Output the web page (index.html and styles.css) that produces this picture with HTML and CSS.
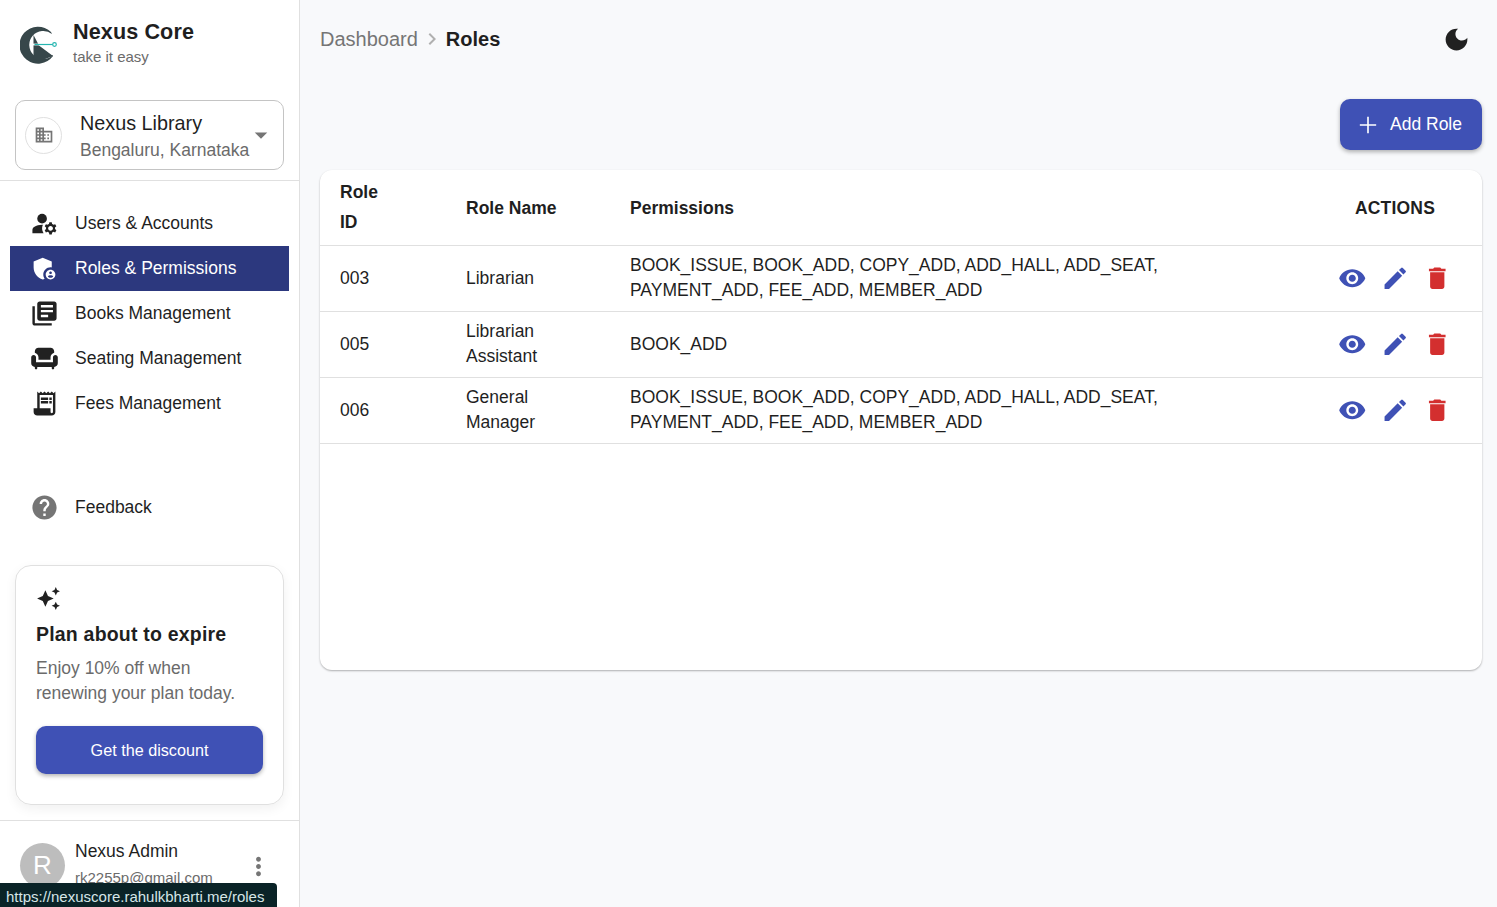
FILE: index.html
```html
<!DOCTYPE html>
<html lang="en">
<head>
  <meta charset="UTF-8">
  <title>Nexus Core - Roles</title>
  <link rel="stylesheet" href="styles.css">
</head>
<body>
  <div class="layout">
    <aside class="sidebar">
      <div class="brand">
        <svg class="logo" viewBox="0 0 40 40">
          <path d="M31 7A18.500 18.500 0 1 0 33 31L33 30A14 14 0 1 1 32 9z" fill="#37474a"/>
          <path d="M13.500 10L19 20.500L33 31L20 36L13.500 34z" fill="#37474a"/>
          <path d="M13 19.500H33" stroke="#fff" stroke-width="1.800"/>
          <path d="M14.500 19.500H33" stroke="#26b5b0" stroke-width="1.200"/>
          <circle cx="34.500" cy="19.500" r="1.800" fill="#fff" stroke="#26b5b0" stroke-width="1.200"/>
        </svg>
        <div>
          <div class="brand-name">Nexus Core</div>
          <div class="brand-tag">take it easy</div>
        </div>
      </div>

      <div class="org-wrap">
        <div class="org-select">
          <span class="org-icon">
            <svg viewBox="0 0 24 24"><path d="M12 7V3H2v18h20V7H12zM6 19H4v-2h2v2zm0-4H4v-2h2v2zm0-4H4V9h2v2zm0-4H4V5h2v2zm4 12H8v-2h2v2zm0-4H8v-2h2v2zm0-4H8V9h2v2zm0-4H8V5h2v2zm10 12h-8v-2h2v-2h-2v-2h2v-2h-2V9h8v10zm-2-8h-2v2h2v-2zm0 4h-2v2h2v-2z"/></svg>
          </span>
          <div class="org-text">
            <div class="org-name">Nexus Library</div>
            <div class="org-place">Bengaluru, Karnataka</div>
          </div>
          <svg class="org-caret" viewBox="0 0 24 24"><path d="M7 10l5 5 5-5z"/></svg>
        </div>
      </div>

      <nav class="nav">
        <a class="nav-item">
          <svg viewBox="0 0 24 24"><circle cx="10" cy="8" r="4"/><path d="M10.670 13.020c-.22-.01-.44-.02-.67-.02-2.420 0-4.680.67-6.610 1.820-.88.52-1.390 1.500-1.390 2.530V20h9.260c-.79-1.130-1.260-2.510-1.260-4 0-1.070.25-2.070.67-2.980zM20.750 16c0-.22-.03-.42-.06-.63l1.140-1.010-1-1.730-1.450.49c-.32-.27-.68-.48-1.080-.63L18 11h-2l-.3 1.490c-.4.15-.76.36-1.080.63l-1.450-.49-1 1.730 1.140 1.010c-.03.21-.06.41-.06.63s.03.42.06.63l-1.140 1.010 1 1.730 1.450-.49c.32.27.68.48 1.080.63L16 21h2l.3-1.490c.4-.15.76-.36 1.080-.63l1.450.49 1-1.730-1.140-1.010c.03-.21.06-.41.06-.63zM17 18c-1.100 0-2-.9-2-2s.9-2 2-2 2 .9 2 2-.9 2-2 2z"/></svg>
          Users &amp; Accounts
        </a>
        <a class="nav-item active">
          <svg viewBox="0 0 24 24"><path d="M17 11c.34 0 .67.04 1 .09V6.270L10.500 3 3 6.270v4.910c0 4.540 3.200 8.790 7.500 9.820.55-.13 1.080-.32 1.600-.55-.69-.98-1.100-2.170-1.100-3.450 0-3.310 2.690-6 6-6z"/><path d="M17 13c-2.210 0-4 1.790-4 4s1.790 4 4 4 4-1.790 4-4-1.790-4-4-4zm0 1.380c.62 0 1.120.51 1.120 1.120s-.51 1.120-1.120 1.120-1.120-.51-1.120-1.120.5-1.120 1.120-1.120zm0 5.370c-.93 0-1.740-.46-2.240-1.170.05-.72 1.510-1.080 2.240-1.080s2.190.36 2.240 1.080c-.5.71-1.310 1.170-2.240 1.170z"/></svg>
          Roles &amp; Permissions
        </a>
        <a class="nav-item">
          <svg viewBox="0 0 24 24"><path d="M4 6H2v14c0 1.100.9 2 2 2h14v-2H4V6zm16-4H8c-1.100 0-2 .9-2 2v12c0 1.100.9 2 2 2h12c1.100 0 2-.9 2-2V4c0-1.100-.9-2-2-2zm-1 9H9V9h10v2zm-4 4H9v-2h6v2zm4-8H9V5h10v2z"/></svg>
          Books Management
        </a>
        <a class="nav-item">
          <svg viewBox="0 0 24 24"><path d="M7 11v2h10v-2c0-1.860 1.280-3.410 3-3.860V6c0-1.650-1.350-3-3-3H7C5.350 3 4 4.350 4 6v1.140c1.720.45 3 2 3 3.860z"/><path d="M21 9c-1.100 0-2 .9-2 2v4H5v-4c0-1.100-.9-2-2-2s-2 .9-2 2v5c0 1.650 1.350 3 3 3v1c0 .55.45 1 1 1s1-.45 1-1v-1h12v1c0 .55.45 1 1 1s1-.45 1-1v-1c1.650 0 3-1.350 3-3v-5c0-1.100-.9-2-2-2z"/></svg>
          Seating Management
        </a>
        <a class="nav-item">
          <svg viewBox="0 0 24 24"><path d="M19.500 3.500 18 2l-1.500 1.500L15 2l-1.500 1.500L12 2l-1.500 1.500L9 2 7.500 3.500 6 2v14H3v3c0 1.660 1.340 3 3 3h12c1.660 0 3-1.340 3-3V2l-1.500 1.500zM19 19c0 .55-.45 1-1 1s-1-.45-1-1v-3H8V5h11v14z"/><path d="M9 7h6v2H9zm7 0h2v2h-2zm-7 3h6v2H9zm7 0h2v2h-2z"/></svg>
          Fees Management
        </a>
      </nav>

      <a class="nav-item feedback">
        <svg viewBox="0 0 24 24"><path d="M12 2C6.480 2 2 6.480 2 12s4.480 10 10 10 10-4.480 10-10S17.520 2 12 2zm1 17h-2v-2h2v2zm2.070-7.750-.9.92C13.450 12.900 13 13.500 13 15h-2v-.5c0-1.100.45-2.100 1.170-2.830l1.240-1.260c.37-.36.59-.86.59-1.410 0-1.100-.9-2-2-2s-2 .9-2 2H8c0-2.210 1.790-4 4-4s4 1.790 4 4c0 .88-.36 1.680-.93 2.250z"/></svg>
        Feedback
      </a>

      <div class="plan-card">
        <svg class="plan-icon" viewBox="0 0 24 24"><path d="M19 9l1.250-2.750L23 5l-2.750-1.250L19 1l-1.250 2.750L15 5l2.750 1.250L19 9zm-7.500.5L9 4 6.500 9.500 1 12l5.500 2.500L9 20l2.500-5.500L17 12l-5.500-2.500zM19 15l-1.250 2.750L15 19l2.750 1.250L19 23l1.250-2.750L23 19l-2.750-1.250L19 15z"/></svg>
        <div class="plan-title">Plan about to expire</div>
        <p class="plan-text">Enjoy 10% off when renewing your plan today.</p>
        <button class="plan-btn">Get the discount</button>
      </div>

      <div class="user-row">
        <div class="avatar">R</div>
        <div class="user-text">
          <div class="user-name">Nexus Admin</div>
          <div class="user-mail">rk2255p@gmail.com</div>
        </div>
        <svg class="user-more" viewBox="0 0 24 24"><path d="M12 8c1.100 0 2-.9 2-2s-.9-2-2-2-2 .9-2 2 .9 2 2 2zm0 2c-1.100 0-2 .9-2 2s.9 2 2 2 2-.9 2-2-.9-2-2-2zm0 6c-1.100 0-2 .9-2 2s.9 2 2 2 2-.9 2-2-.9-2-2-2z"/></svg>
      </div>
    </aside>

    <main class="main">
      <header class="topbar">
        <div class="crumbs">
          <span class="crumb">Dashboard</span>
          <svg class="crumb-sep" viewBox="0 0 24 24"><path d="M10 6 8.590 7.410 13.170 12l-4.580 4.590L10 18l6-6z"/></svg>
          <span class="crumb-current">Roles</span>
        </div>
        <svg class="theme-icon" viewBox="0 0 24 24"><path d="M12 3c-4.970 0-9 4.030-9 9s4.030 9 9 9 9-4.030 9-9c0-.46-.04-.92-.1-1.360-.98 1.370-2.580 2.260-4.400 2.260-2.980 0-5.400-2.420-5.400-5.400 0-1.810.89-3.420 2.260-4.400-.44-.06-.9-.1-1.360-.1z"/></svg>
      </header>

      <div class="toolbar">
        <button class="add-btn">
          <svg viewBox="0 0 24 24"><path d="M19 12.700h-6.300V19h-1.400v-6.300H5v-1.400h6.300V5h1.400v6.300H19z"/></svg>
          Add Role
        </button>
      </div>

      <div class="table-card">
        <table class="roles">
          <colgroup>
            <col class="col-id"><col class="col-name"><col class="col-perm"><col class="col-act">
          </colgroup>
          <thead>
            <tr>
              <th>Role<br>ID</th>
              <th>Role Name</th>
              <th>Permissions</th>
              <th class="act-head">ACTIONS</th>
            </tr>
          </thead>
          <tbody>
            <tr>
              <td>003</td>
              <td>Librarian</td>
              <td class="perm">BOOK_ISSUE, BOOK_ADD, COPY_ADD, ADD_HALL, ADD_SEAT, PAYMENT_ADD, FEE_ADD, MEMBER_ADD</td>
              <td>
                <div class="actions">
                  <svg class="eye" viewBox="0 0 24 24"><path d="M12 4.500C7 4.500 2.730 7.610 1 12c1.730 4.390 6 7.500 11 7.500s9.270-3.110 11-7.500c-1.730-4.390-6-7.500-11-7.500zM12 17c-2.760 0-5-2.240-5-5s2.240-5 5-5 5 2.240 5 5-2.240 5-5 5zm0-8c-1.660 0-3 1.340-3 3s1.340 3 3 3 3-1.340 3-3-1.340-3-3-3z"/></svg>
                  <svg class="pen" viewBox="0 0 24 24"><path d="M3 17.250V21h3.750L17.810 9.940l-3.750-3.750L3 17.250zM20.710 7.040c.39-.39.39-1.020 0-1.410l-2.340-2.340a.9959.9959 0 0 0-1.410 0l-1.830 1.830 3.750 3.750 1.830-1.830z"/></svg>
                  <svg class="bin" viewBox="0 0 24 24"><path d="M6 19c0 1.100.9 2 2 2h8c1.100 0 2-.9 2-2V7H6v12zM19 4h-3.500l-1-1h-5l-1 1H5v2h14V4z"/></svg>
                </div>
              </td>
            </tr>
            <tr>
              <td>005</td>
              <td>Librarian Assistant</td>
              <td class="perm">BOOK_ADD</td>
              <td>
                <div class="actions">
                  <svg class="eye" viewBox="0 0 24 24"><path d="M12 4.500C7 4.500 2.730 7.610 1 12c1.730 4.390 6 7.500 11 7.500s9.270-3.110 11-7.500c-1.730-4.390-6-7.500-11-7.500zM12 17c-2.760 0-5-2.240-5-5s2.240-5 5-5 5 2.240 5 5-2.240 5-5 5zm0-8c-1.660 0-3 1.340-3 3s1.340 3 3 3 3-1.340 3-3-1.340-3-3-3z"/></svg>
                  <svg class="pen" viewBox="0 0 24 24"><path d="M3 17.250V21h3.750L17.810 9.940l-3.750-3.750L3 17.250zM20.710 7.040c.39-.39.39-1.020 0-1.410l-2.340-2.340a.9959.9959 0 0 0-1.410 0l-1.830 1.830 3.750 3.750 1.830-1.830z"/></svg>
                  <svg class="bin" viewBox="0 0 24 24"><path d="M6 19c0 1.100.9 2 2 2h8c1.100 0 2-.9 2-2V7H6v12zM19 4h-3.500l-1-1h-5l-1 1H5v2h14V4z"/></svg>
                </div>
              </td>
            </tr>
            <tr>
              <td>006</td>
              <td>General Manager</td>
              <td class="perm">BOOK_ISSUE, BOOK_ADD, COPY_ADD, ADD_HALL, ADD_SEAT, PAYMENT_ADD, FEE_ADD, MEMBER_ADD</td>
              <td>
                <div class="actions">
                  <svg class="eye" viewBox="0 0 24 24"><path d="M12 4.500C7 4.500 2.730 7.610 1 12c1.730 4.390 6 7.500 11 7.500s9.270-3.110 11-7.500c-1.730-4.390-6-7.500-11-7.500zM12 17c-2.760 0-5-2.240-5-5s2.240-5 5-5 5 2.240 5 5-2.240 5-5 5zm0-8c-1.660 0-3 1.340-3 3s1.340 3 3 3 3-1.340 3-3-1.340-3-3-3z"/></svg>
                  <svg class="pen" viewBox="0 0 24 24"><path d="M3 17.250V21h3.750L17.810 9.940l-3.750-3.750L3 17.250zM20.710 7.040c.39-.39.39-1.020 0-1.410l-2.340-2.340a.9959.9959 0 0 0-1.410 0l-1.830 1.830 3.750 3.750 1.830-1.830z"/></svg>
                  <svg class="bin" viewBox="0 0 24 24"><path d="M6 19c0 1.100.9 2 2 2h8c1.100 0 2-.9 2-2V7H6v12zM19 4h-3.500l-1-1h-5l-1 1H5v2h14V4z"/></svg>
                </div>
              </td>
            </tr>
          </tbody>
        </table>
      </div>
    </main>
  </div>

  <div class="status-bar">https://nexuscore.rahulkbharti.me/roles</div>
</body>
</html>
```

FILE: styles.css
```css
* {
  box-sizing: border-box;
}

html, body {
  height: 100%;
}

body {
  margin: 0;
  overflow: hidden;
  font-family: "Liberation Sans", Arial, sans-serif;
  color: #1f1f1f;
  background-color: #f8f9fb;
}

.layout {
  display: flex;
  height: 907px;
}

/* sidebar */
.sidebar {
  width: 300px;
  flex-shrink: 0;
  display: flex;
  flex-direction: column;
  background: white;
  border-right: 1px solid #e0e0e0;
  overflow: hidden;
}

.brand {
  height: 90px;
  padding: 0 0 0 20px;
  display: flex;
  align-items: center;
  gap: 13px;
}

.logo {
  width: 40px;
  height: 40px;
  flex-shrink: 0;
}

.brand-name {
  font-size: 21.600px;
  font-weight: 700;
  line-height: 28px;
  margin-top: -4px;
  letter-spacing: 0.1px;
}

.brand-tag {
  font-size: 15px;
  line-height: 22px;
  color: #6b6b6b;
}

.org-wrap {
  padding: 10px 15px;
  border-bottom: 1px solid #e0e0e0;
  height: 91px;
}

.org-select {
  height: 70px;
  border: 1px solid #c4c4c4;
  border-radius: 10px;
  display: flex;
  align-items: center;
  padding: 0 9px;
}

.org-icon {
  width: 37px;
  height: 37px;
  border: 1px solid #e0e0e0;
  border-radius: 50%;
  display: flex;
  align-items: center;
  justify-content: center;
  flex-shrink: 0;
}

.org-icon svg {
  width: 20px;
  height: 20px;
  fill: #757575;
}

.org-text {
  margin-left: 18px;
  padding-top: 2px;
  flex: 1;
  white-space: nowrap;
}

.org-name {
  font-size: 19.800px;
  line-height: 28px;
}

.org-place {
  font-size: 17.500px;
  line-height: 26px;
  color: #6b6b6b;
}

.org-caret {
  width: 30px;
  height: 30px;
  fill: #757575;
  margin-right: -2px;
  margin-left: -8px;
}

.nav {
  padding: 20px 10px 0;
  height: 304px;
}

.nav-item {
  height: 45px;
  display: flex;
  align-items: center;
  gap: 16px;
  padding: 0 20px;
  font-size: 17.500px;
  color: #1f1f1f;
  white-space: nowrap;
}

.nav-item svg {
  width: 29px;
  height: 29px;
  fill: #212121;
  flex-shrink: 0;
}

.nav-item.active {
  background-color: #2c387e;
  color: white;
}

.nav-item.active svg {
  fill: white;
}

.feedback {
  margin: 0 10px;
}

.feedback svg {
  fill: #757575;
}

.plan-card {
  margin: 35px 15px 0;
  height: 240px;
  padding: 20px 20px;
  border: 1px solid #e0e0e0;
  border-radius: 16px;
  box-shadow: 0 4px 12px rgba(0,0,0,0.06);
  flex-shrink: 0;
}

.plan-icon {
  display: block;
  width: 25px;
  height: 25px;
  fill: #212121;
}

.plan-title {
  font-size: 19.500px;
  font-weight: 700;
  line-height: 30px;
  margin-top: 8px;
  letter-spacing: 0.2px;
}

.plan-text {
  margin: 7px 0 0;
  font-size: 17.500px;
  line-height: 25px;
  color: #6b6b6b;
}

.plan-btn {
  display: block;
  width: 100%;
  height: 48px;
  margin-top: 20px;
  border: none;
  border-radius: 10px;
  background-color: #3f51b5;
  color: white;
  font-family: inherit;
  font-size: 16.200px;
  box-shadow: 0 2px 4px rgba(0,0,0,0.3);
}

.user-row {
  margin-top: 15px;
  border-top: 1px solid #e0e0e0;
  display: flex;
  align-items: flex-start;
  padding: 22px 20px 0;
  height: 87px;
}

.avatar {
  width: 45px;
  height: 45px;
  border-radius: 50%;
  background-color: #bdbdbd;
  color: white;
  font-size: 26px;
  display: flex;
  align-items: center;
  justify-content: center;
  flex-shrink: 0;
}

.user-text {
  margin-left: 10px;
  flex: 1;
  white-space: nowrap;
}

.user-name {
  font-size: 17.500px;
  line-height: 20px;
  margin-top: -2px;
}

.user-mail {
  font-size: 15px;
  line-height: 20px;
  margin-top: 7px;
  color: #6b6b6b;
}

.user-more {
  width: 29px;
  height: 29px;
  margin-top: 9px;
  margin-right: 6px;
  fill: #757575;
}

/* main area */
.main {
  flex: 1;
  padding: 0 15px 0 20px;
  min-width: 0;
}

.topbar {
  height: 78px;
  display: flex;
  align-items: center;
  justify-content: space-between;
  padding-right: 11px;
}

.crumbs {
  display: flex;
  align-items: center;
  font-size: 20px;
}

.crumb {
  color: #757575;
}

.crumb-sep {
  width: 24px;
  height: 24px;
  fill: #b0b0b0;
  margin: 0 2px;
}

.crumb-current {
  font-weight: 700;
}

.theme-icon {
  width: 29px;
  height: 29px;
  fill: #212121;
}

.toolbar {
  display: flex;
  justify-content: flex-end;
  margin-top: 21px;
}

.add-btn {
  width: 142px;
  height: 51px;
  display: flex;
  align-items: center;
  gap: 8px;
  padding: 0 0 0 14px;
  border: none;
  border-radius: 10px;
  background-color: #3f51b5;
  color: white;
  font-family: inherit;
  font-size: 17.500px;
  white-space: nowrap;
  box-shadow: 0 2px 4px rgba(0,0,0,0.3);
}

.add-btn svg {
  width: 28px;
  height: 28px;
  fill: white;
}

.table-card {
  margin-top: 20px;
  height: 500px;
  background: white;
  border-radius: 12px;
  box-shadow: 0 1px 2px rgba(0,0,0,0.3);
  overflow: hidden;
}

.roles {
  width: 100%;
  table-layout: fixed;
  border-collapse: collapse;
  font-size: 17.500px;
  line-height: 25px;
}

.col-id { width: 126px; }
.col-name { width: 164px; }
.col-act { width: 174px; }

.roles th {
  height: 75px;
  padding: 6px 20px;
  text-align: left;
  font-weight: 700;
  line-height: 30px;
  border-bottom: 1px solid #e0e0e0;
}

.roles th + th {
  padding-top: 8px;
}

.roles th.act-head {
  text-align: center;
  letter-spacing: 0.2px;
}

.roles td {
  height: 66px;
  padding: 0 20px;
  border-bottom: 1px solid #e0e0e0;
}

.roles td.perm {
  padding-right: 120px;
}

.actions {
  display: flex;
  justify-content: center;
  gap: 14px;
}

.actions svg {
  width: 28.500px;
  height: 28.500px;
}

.eye { fill: #3f51b5; }
.pen { fill: #3f51b5; }
.bin { fill: #d32f2f; }

.status-bar {
  position: fixed;
  left: 0;
  bottom: 0;
  width: 277px;
  height: 24px;
  padding: 0 6px;
  background-color: #0a2327;
  color: #d6e6e8;
  font-size: 15px;
  line-height: 28px;
  white-space: nowrap;
  overflow: hidden;
  border-top-right-radius: 4px;
}
```
